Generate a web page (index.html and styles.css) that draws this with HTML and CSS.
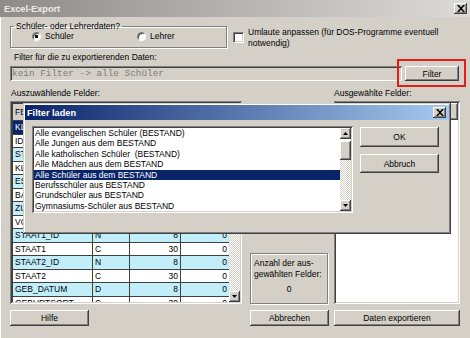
FILE: index.html
```html
<!DOCTYPE html>
<html lang="de">
<head>
    <meta charset="UTF-8">
    <meta name="viewport" content="width=device-width, initial-scale=1.0">
    <title>Excel-Export</title>
    <link rel="stylesheet" href="styles.css">
</head>
<body>
<div class="window">
    <div class="titlebar inactive">
        <span class="title">Excel-Export</span>
        <span class="close-btn">
            <svg width="8" height="7" viewBox="0 0 8 7"><path d="M0 0h2l2 2.3L6 0h2L5 3.5 8 7H6L4 4.7 2 7H0l3-3.5z" fill="#000"/></svg>
        </span>
    </div>

    <div class="content">
        <div class="top-row">
            <fieldset class="group">
                <legend>Schüler- oder Lehrerdaten?</legend>
                <label class="radio-item first"><span class="radio checked"></span>Schüler</label>
                <label class="radio-item"><span class="radio"></span>Lehrer</label>
            </fieldset>
            <label class="check-item">
                <span class="checkbox"></span>
                <span class="check-text">Umlaute anpassen (für DOS-Programme eventuell notwendig)</span>
            </label>
        </div>

        <div class="filter-label">Filter für die zu exportierenden Daten:</div>
        <div class="filter-row">
            <div class="field">kein Filter -&gt; alle Schüler</div>
            <div class="btn filter-btn highlight">Filter</div>
        </div>

        <div class="columns labels">
            <div class="lbl-left">Auszuwählende Felder:</div>
            <div></div>
            <div>Ausgewählte Felder:</div>
        </div>

        <div class="columns lists">
            <div class="table-box">
                <div class="table-wrap">
                    <table class="fields">
                        <thead>
                            <tr><th>FELDNAME</th><th>TYP</th><th>LÄNGE</th><th>DEZ</th></tr>
                        </thead>
                        <tbody>
                            <tr class="selected"><td>KLASSE</td><td>C</td><td class="num">10</td><td class="num">0</td></tr>
                            <tr><td>ID_NR</td><td>N</td><td class="num">8</td><td class="num">0</td></tr>
                            <tr class="alt"><td>STATUS</td><td>C</td><td class="num">10</td><td class="num">0</td></tr>
                            <tr><td>KL_LEHRER</td><td>C</td><td class="num">10</td><td class="num">0</td></tr>
                            <tr class="alt"><td>ESF</td><td>L</td><td class="num">1</td><td class="num">0</td></tr>
                            <tr><td>BAFOEG</td><td>L</td><td class="num">1</td><td class="num">0</td></tr>
                            <tr class="alt"><td>ZUZUG</td><td>D</td><td class="num">8</td><td class="num">0</td></tr>
                            <tr><td>VOLLJAEHRIG</td><td>L</td><td class="num">1</td><td class="num">0</td></tr>
                            <tr class="alt"><td>STAAT1_ID</td><td>N</td><td class="num">8</td><td class="num">0</td></tr>
                            <tr><td>STAAT1</td><td>C</td><td class="num">30</td><td class="num">0</td></tr>
                            <tr class="alt"><td>STAAT2_ID</td><td>N</td><td class="num">8</td><td class="num">0</td></tr>
                            <tr><td>STAAT2</td><td>C</td><td class="num">30</td><td class="num">0</td></tr>
                            <tr class="alt"><td>GEB_DATUM</td><td>D</td><td class="num">8</td><td class="num">0</td></tr>
                            <tr><td>GEBURTSORT</td><td>C</td><td class="num">30</td><td class="num">0</td></tr>
                        </tbody>
                    </table>
                </div>
                <div class="vscroll">
                    <span class="sb-btn"><svg width="5" height="3" viewBox="0 0 5 3"><path d="M0 3h5L2.5 0z"/></svg></span>
                    <span class="sb-track"></span>
                    <span class="sb-btn"><svg width="5" height="3" viewBox="0 0 5 3"><path d="M0 0h5L2.5 3z"/></svg></span>
                </div>
            </div>

            <div class="middle">
                <div class="count-box">
                    <div>Anzahl der aus-</div>
                    <div>gewählten Felder:</div>
                    <div class="count">0</div>
                </div>
            </div>

            <div class="selected-list">
                <div class="sel-area"></div>
                <div class="sel-scroll"><span class="sel-thumb"></span></div>
            </div>
        </div>

        <div class="columns buttons">
            <div class="btn">Hilfe</div>
            <div class="btn">Abbrechen</div>
            <div class="btn">Daten exportieren</div>
        </div>
    </div>

    <!-- modal dialog over the export window -->
    <div class="dialog">
        <div class="titlebar active">
            <span class="title">Filter laden</span>
            <span class="close-btn small">
                <svg width="8" height="7" viewBox="0 0 8 7"><path d="M0 0h2l2 2.3L6 0h2L5 3.5 8 7H6L4 4.7 2 7H0l3-3.5z" fill="#000"/></svg>
            </span>
        </div>
        <div class="dialog-body">
            <div class="filter-list">
                <ul class="items">
                    <li>Alle evangelischen Schüler (BESTAND)</li>
                    <li>Alle Jungen aus dem BESTAND</li>
                    <li>Alle katholischen Schüler &nbsp;(BESTAND)</li>
                    <li>Alle Mädchen aus dem BESTAND</li>
                    <li class="selected">Alle Schüler aus dem BESTAND</li>
                    <li>Berufsschüler aus BESTAND</li>
                    <li>Grundschüler aus BESTAND</li>
                    <li>Gymnasiums-Schüler aus BESTAND</li>
                </ul>
                <div class="vscroll">
                    <span class="sb-btn"><svg width="5" height="3" viewBox="0 0 5 3"><path d="M0 3h5L2.5 0z"/></svg></span>
                    <span class="sb-thumb"></span>
                    <span class="sb-track"></span>
                    <span class="sb-btn"><svg width="5" height="3" viewBox="0 0 5 3"><path d="M0 0h5L2.5 3z"/></svg></span>
                </div>
            </div>
            <div class="dialog-buttons">
                <div class="btn ok-btn">OK</div>
                <div class="btn cancel-btn">Abbruch</div>
            </div>
        </div>
    </div>
</div>
</body>
</html>
```

FILE: styles.css
```css
* {
    margin: 0;
    padding: 0;
    box-sizing: border-box;
}

body {
    background-color: #d4d0c8;
    color: #000;
    font-family: "Liberation Sans", Arial, sans-serif;
    font-size: 8.5px;
}

.window {
    position: relative;
    width: 470px;
    height: 338px;
    overflow: hidden;
    background-color: #d4d0c8;
    box-shadow: inset 1px 0 #fff;
}

/* title bars */
.titlebar {
    display: flex;
    align-items: center;
    justify-content: space-between;
    height: 17px;
    padding: 0 3px 0 4px;
}

.titlebar.inactive {
    background: linear-gradient(90deg, #8e8c8a, #dcdbd9);
    color: #ecebe8;
}

.titlebar.active {
    height: 15px;
    padding: 0 3px 0 2px;
    background: linear-gradient(90deg, #0a246a, #a6caf0);
    color: #fff;
}

.title {
    font-weight: bold;
    font-size: 9.2px;
}

.close-btn {
    display: flex;
    align-items: center;
    justify-content: center;
    width: 13px;
    height: 11px;
    background-color: #d4d0c8;
    box-shadow: inset -1px -1px #404040, inset 1px 1px #fff, inset -2px -2px #808080;
}

/* raised button */
.btn {
    display: flex;
    align-items: center;
    justify-content: center;
    background-color: #d4d0c8;
    box-shadow: inset -1px -1px #404040, inset 1px 1px #fff, inset -2px -2px #808080;
}

.content {
    padding: 0 10px;
}

/* top row: group box + checkbox */
.top-row {
    display: flex;
    margin-top: 4px;
}

.group {
    width: 217px;
    border: 1px solid #808080;
    box-shadow: inset 1px 1px #fff, 1px 1px #fff;
    padding: 0 0 6px 0;
    display: flex;
    align-items: center;
}

.group legend {
    margin-left: 3px;
    padding: 0 2px;
    line-height: 10px;
}

.radio-item {
    display: inline-flex;
    align-items: center;
    gap: 4px;
    line-height: 10px;
}

.radio-item.first {
    margin-left: 21px;
    width: 105px;
}

.radio {
    width: 9px;
    height: 9px;
    border-radius: 50%;
    background-color: #fff;
    border: 1px solid;
    border-color: #808080 #fff #fff #808080;
    box-shadow: inset 1px 1px #404040;
}

.radio.checked {
    background: radial-gradient(circle, #000 0 1.6px, #fff 2px);
}

.check-item {
    display: flex;
    align-items: flex-start;
    gap: 4px;
    margin: 6px 0 0 6px;
}

.checkbox {
    flex: none;
    width: 11px;
    height: 11px;
    margin-top: 5px;
    background-color: #fff;
    border: 1px solid;
    border-color: #808080 #fff #fff #808080;
    box-shadow: inset 1px 1px #404040, inset -1px -1px #d4d0c8;
}

.check-text {
    width: 200px;
    line-height: 10.5px;
}

/* filter field */
.filter-label {
    margin-top: 4px;
    padding-left: 4px;
    line-height: 10px;
}

.filter-row {
    display: flex;
    margin-top: 4px;
    height: 15px;
}

.field {
    width: 392px;
    padding: 2px 0 0 2px;
    font-family: "Liberation Mono", "Courier New", monospace;
    font-size: 9.4px;
    line-height: 11px;
    color: #7c7c7c;
    background-color: #d4d0c8;
    box-shadow: inset 1px 1px #808080, inset -1px -1px #fff, inset 2px 2px #404040;
}

.filter-btn {
    position: relative;
    width: 54px;
    margin-left: 3px;
}

.highlight::after {
    content: "";
    position: absolute;
    top: -7px;
    right: -7px;
    bottom: -6px;
    left: -8px;
    border: 2px solid #e41b17;
}

/* three column area */
.columns {
    display: grid;
    grid-template-columns: 240px 84px 126px;
}

.labels {
    margin-top: 7px;
    line-height: 10px;
}

.lbl-left {
    padding-left: 1px;
}

.lists {
    margin-top: 3px;
    height: 203px;
    grid-template-rows: 203px;
}

.table-box {
    display: flex;
    width: 232px;
    height: 203px;
    padding: 2px;
    box-shadow: inset 1px 1px #808080, inset -1px -1px #fff, inset 2px 2px #404040, inset -2px -2px #d4d0c8;
}

.table-wrap {
    width: 217px;
    height: 199px;
    overflow: hidden;
    background-color: #fff;
}

.fields {
    width: 217px;
    border-collapse: collapse;
    table-layout: fixed;
}

.fields th,
.fields td {
    border: 1px solid #404040;
    padding: 0 2px;
    white-space: nowrap;
    overflow: hidden;
    text-align: left;
    font-weight: normal;
    line-height: 11px;
}

.fields th {
    height: 17px;
    background-color: #d4d0c8;
}

.fields th:nth-child(1) { width: 80px; }
.fields th:nth-child(2) { width: 37px; }
.fields th:nth-child(3) { width: 51px; }
.fields th:nth-child(4) { width: 49px; }

.fields tbody tr:nth-child(odd) td {
    height: 14px;
}

.fields tbody tr:nth-child(even) td {
    height: 13px;
}

.fields td.num {
    text-align: right;
}

.fields tr.alt td {
    background-color: #c2eefa;
}

.fields tr.selected td {
    background-color: #0a246a;
    color: #fff;
}

/* scrollbars */
.vscroll {
    display: flex;
    flex-direction: column;
    width: 11px;
    flex: none;
}

.sb-btn {
    display: flex;
    align-items: center;
    justify-content: center;
    height: 11px;
    flex: none;
    background-color: #d4d0c8;
    box-shadow: inset -1px -1px #404040, inset 1px 1px #fff, inset -2px -2px #808080;
}

.sb-track {
    flex: 1;
    background: repeating-conic-gradient(#fff 0 25%, #d4d0c8 0 50%) 0 0 / 2px 2px;
}

.sb-thumb {
    height: 19px;
    flex: none;
    margin-top: 2px;
    background-color: #d4d0c8;
    box-shadow: inset -1px -1px #404040, inset 1px 1px #fff, inset -2px -2px #808080;
}

.middle {
    display: flex;
    flex-direction: column;
    justify-content: flex-end;
}

.count-box {
    width: 78px;
    height: 51px;
    padding: 4px 0 0 3px;
    border: 1px solid #808080;
    box-shadow: inset 1px 1px #fff, 1px 1px #fff;
    line-height: 11px;
}

.count {
    margin-top: 4px;
    text-align: center;
    padding-right: 3px;
}

.selected-list {
    display: flex;
    height: 203px;
    padding: 2px;
    box-shadow: inset 1px 1px #808080, inset -1px -1px #fff, inset 2px 2px #404040, inset -2px -2px #d4d0c8;
    background-color: #fff;
}

.sel-area {
    flex: 1;
}

.sel-scroll {
    width: 11px;
}

.sel-thumb {
    display: block;
    height: 17px;
    background-color: #d4d0c8;
    box-shadow: inset -1px -1px #404040, inset 1px 1px #fff, inset -2px -2px #808080;
}

.buttons {
    margin-top: 6px;
    height: 16px;
}

.buttons .btn {
    width: 79px;
}

.buttons .btn:last-child {
    width: 126px;
}

/* Filter laden dialog */
.dialog {
    position: absolute;
    left: 23px;
    top: 103px;
    width: 428px;
    height: 131px;
    padding: 2px;
    background-color: #d4d0c8;
    box-shadow: inset -1px -1px #404040, inset 1px 1px #d4d0c8, inset -2px -2px #808080, inset 2px 2px #fff;
}

.dialog-body {
    display: flex;
    padding: 6px 0 0 7px;
}

.filter-list {
    display: flex;
    width: 321px;
    height: 87px;
    padding: 2px;
    background-color: #fff;
    box-shadow: inset 1px 1px #808080, inset -1px -1px #fff, inset 2px 2px #404040, inset -2px -2px #d4d0c8;
}

.items {
    flex: 1;
    list-style: none;
}

.items li {
    line-height: 10.4px;
    padding-left: 1px;
    white-space: pre;
}

.items li.selected {
    background-color: #0a246a;
    color: #fff;
}

.dialog-buttons {
    display: flex;
    flex-direction: column;
    margin-left: 7px;
}

.dialog-buttons .btn {
    width: 79px;
}

.ok-btn {
    height: 20px;
    margin-top: 1px;
}

.cancel-btn {
    height: 19px;
    margin-top: 7px;
}
```
